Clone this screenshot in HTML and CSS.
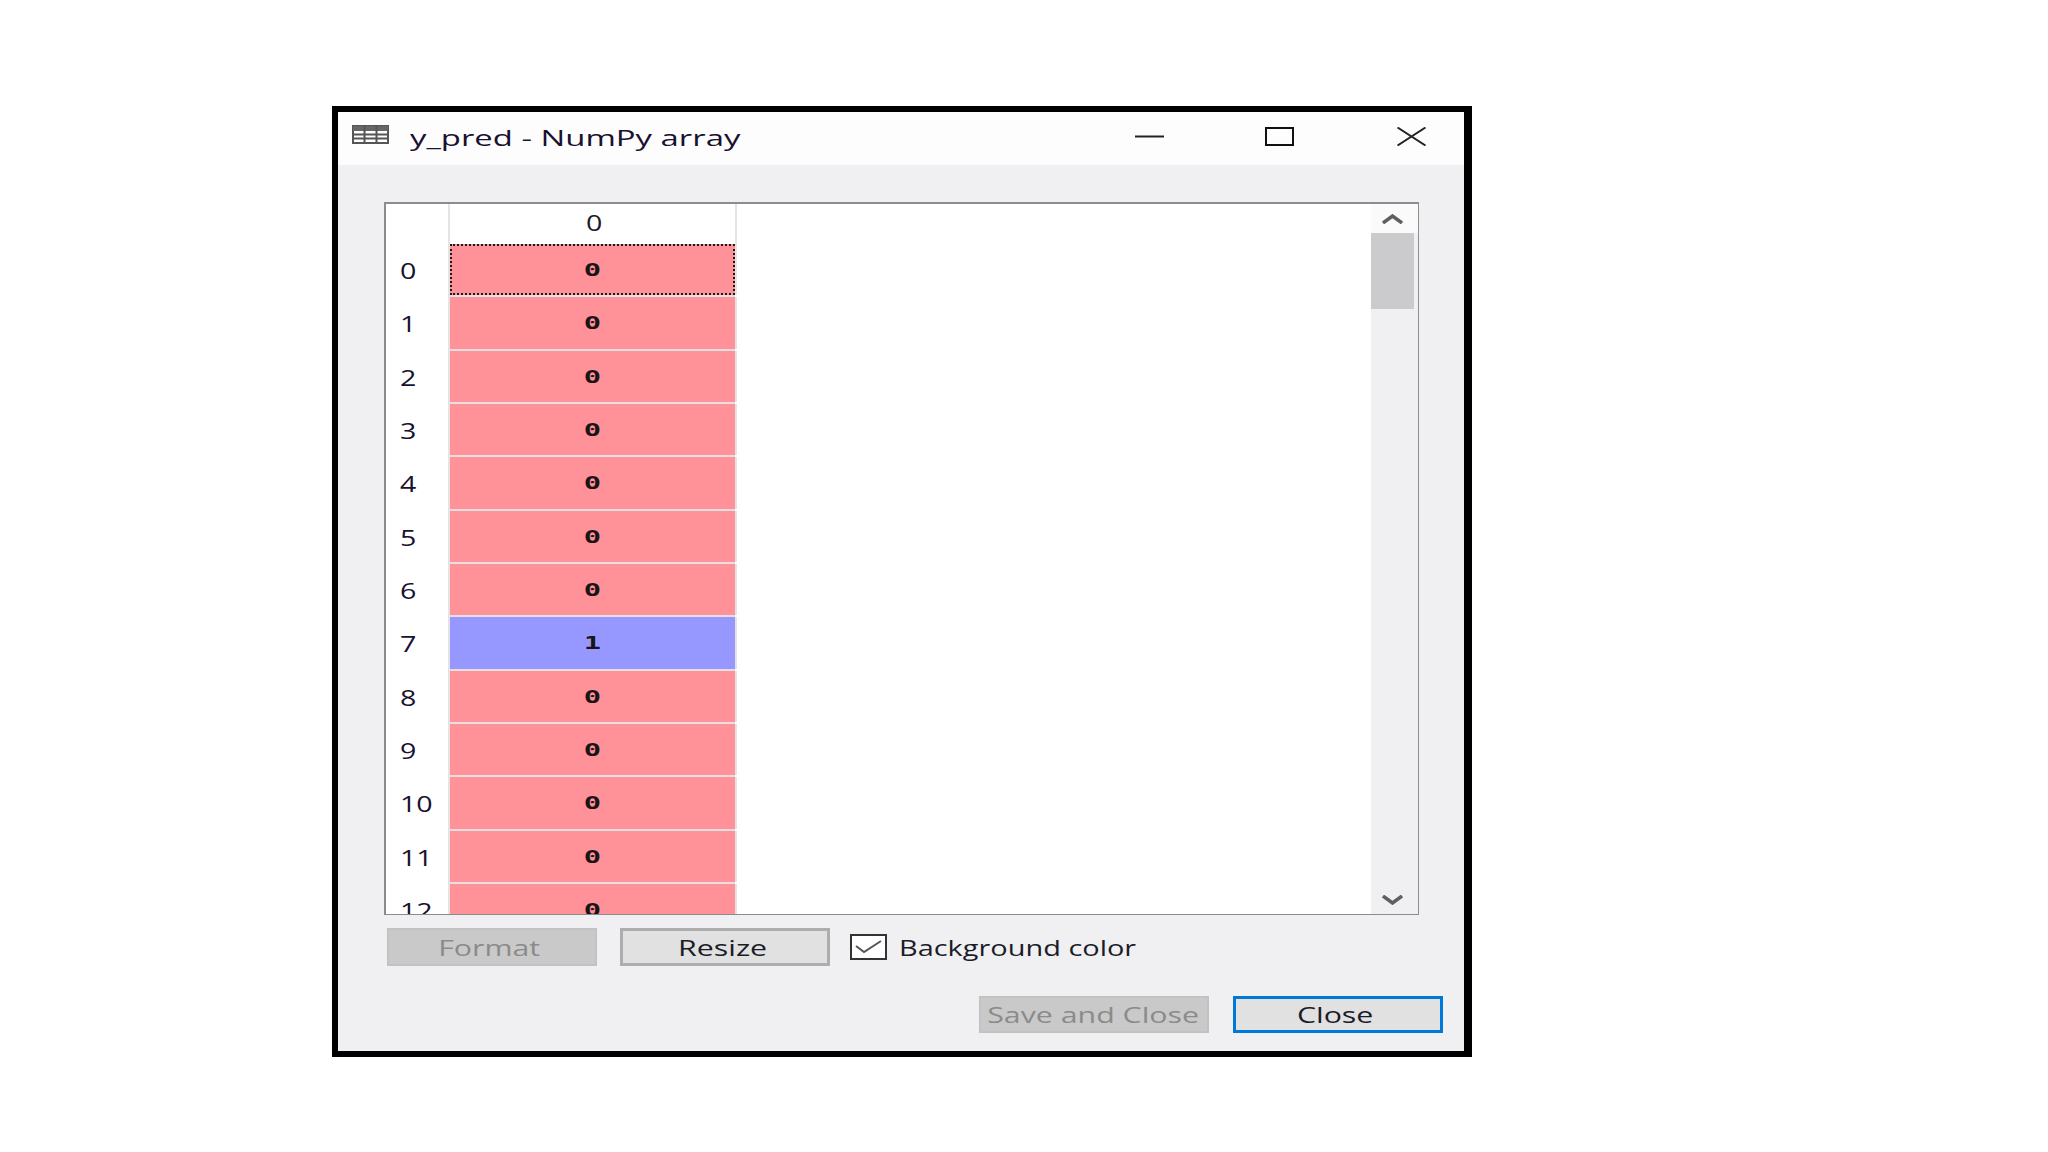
FILE: index.html
```html
<!DOCTYPE html>
<html lang="en">
<head>
<meta charset="utf-8">
<title>y_pred - NumPy array</title>
<link rel="stylesheet" href="styles.css">
</head>
<body>
<div class="window">
  <header class="titlebar">
    <svg class="app-icon" width="37" height="19" viewBox="0 0 37 19"><rect x="1" y="1" width="35" height="17" fill="#fff" stroke="#555" stroke-width="2"/><path d="M1 1h35v5H1z" fill="#666"/><path d="M1 9.500h35M1 13.500h35M12.500 1v17M24.500 1v17" stroke="#555" stroke-width="2" fill="none"/></svg>
    <span class="title"><span class="sx">y_pred - NumPy array</span></span>
    <svg class="ctl ctl-min" width="29" height="19" viewBox="0 0 29 19"><path d="M0 9.500h29" stroke="#222" stroke-width="2"/></svg>
    <svg class="ctl ctl-max" width="29" height="19" viewBox="0 0 29 19"><rect x="1" y="1" width="27" height="17" fill="none" stroke="#111" stroke-width="2"/></svg>
    <svg class="ctl ctl-close" width="29" height="19" viewBox="0 0 29 19"><path d="M0.500 0.500L28.500 18.500M28.500 0.500L0.500 18.500" stroke="#222" stroke-width="2" fill="none"/></svg>
  </header>
  <main class="content">
    <div class="frame">
      <div class="table">
        <div class="row row-head"><div class="rowlabel"></div><div class="colhead"><span class="sx">0</span></div></div>
        <div class="row"><div class="rowlabel"><span class="sx">0</span></div><div class="cell neg focus"><span class="mono">0</span></div></div>
        <div class="row"><div class="rowlabel"><span class="sx">1</span></div><div class="cell neg"><span class="mono">0</span></div></div>
        <div class="row"><div class="rowlabel"><span class="sx">2</span></div><div class="cell neg"><span class="mono">0</span></div></div>
        <div class="row"><div class="rowlabel"><span class="sx">3</span></div><div class="cell neg"><span class="mono">0</span></div></div>
        <div class="row"><div class="rowlabel"><span class="sx">4</span></div><div class="cell neg"><span class="mono">0</span></div></div>
        <div class="row"><div class="rowlabel"><span class="sx">5</span></div><div class="cell neg"><span class="mono">0</span></div></div>
        <div class="row"><div class="rowlabel"><span class="sx">6</span></div><div class="cell neg"><span class="mono">0</span></div></div>
        <div class="row"><div class="rowlabel"><span class="sx">7</span></div><div class="cell pos"><span class="mono">1</span></div></div>
        <div class="row"><div class="rowlabel"><span class="sx">8</span></div><div class="cell neg"><span class="mono">0</span></div></div>
        <div class="row"><div class="rowlabel"><span class="sx">9</span></div><div class="cell neg"><span class="mono">0</span></div></div>
        <div class="row"><div class="rowlabel"><span class="sx">10</span></div><div class="cell neg"><span class="mono">0</span></div></div>
        <div class="row"><div class="rowlabel"><span class="sx">11</span></div><div class="cell neg"><span class="mono">0</span></div></div>
        <div class="row"><div class="rowlabel"><span class="sx">12</span></div><div class="cell neg"><span class="mono">0</span></div></div>
      </div>
      <div class="scrollbar">
        <div class="sb-btn sb-up"><svg width="21" height="10" viewBox="0 0 21 10"><path d="M1 9L10.500 2L20 9" fill="none" stroke="#5f5f5f" stroke-width="3.500"/></svg></div>
        <div class="sb-thumb"></div>
        <div class="sb-track"></div>
        <div class="sb-btn sb-down"><svg width="21" height="10" viewBox="0 0 21 10"><path d="M1 1L10.500 8L20 1" fill="none" stroke="#5f5f5f" stroke-width="3.500"/></svg></div>
      </div>
    </div>
    <div class="tools">
      <div class="btn btn-disabled btn-format"><span class="sx">Format</span></div>
      <div class="btn btn-resize"><span class="sx">Resize</span></div>
      <label class="check">
        <svg class="check-box" width="37" height="26" viewBox="0 0 37 26"><rect x="1" y="1" width="35" height="24" fill="#fff" stroke="#333" stroke-width="2"/><path d="M6 12L14 18L31 7" fill="none" stroke="#555" stroke-width="2"/></svg>
        <span class="check-label"><span class="sx">Background color</span></span>
      </label>
    </div>
    <div class="footer">
      <div class="btn btn-disabled btn-save"><span class="sx">Save and Close</span></div>
      <div class="btn btn-close"><span class="sx">Close</span></div>
    </div>
  </main>
</div>
</body>
</html>
```
FILE: styles.css
```css
html, body { margin: 0; padding: 0; background: #fff; }
body {
  width: 2048px;
  height: 1152px;
  padding: 106px 0 0 332px;
  box-sizing: border-box;
  font-family: "Open Sans", "Noto Sans", sans-serif;
  font-size: 22px;
  color: #1c1c28;
  overflow: hidden;
}
.window {
  width: 1140px;
  height: 951px;
  box-sizing: border-box;
  border: solid #000;
  border-width: 6px 8px 6px 6px;
  background: #f0f0f2;
  display: flex;
  flex-direction: column;
}
.sx { display: inline-block; transform: scaleX(1.3); white-space: nowrap; }
.titlebar {
  height: 53px;
  background: #fdfdfd;
  display: flex;
  align-items: center;
  flex: none;
  padding-left: 14px;
}
.app-icon { flex: none; margin-top: -8px; }
.title { margin-left: 21px; width: 330px; flex: none; margin-top: -3px; font-size: 22.500px; color: #1a1030; }
.title .sx { transform: scaleX(1.46); transform-origin: left center; }
.ctl { flex: none; margin-top: -5px; }
.ctl-min { margin-left: 395px; }
.ctl-max { margin-left: 101px; }
.ctl-close { margin-left: 103px; }
.content { flex: 1; padding: 37px 45px 0 46px; display: flex; flex-direction: column; }
.frame {
  height: 713px;
  box-sizing: border-box;
  border: solid #8c8c8c;
  border-width: 2px 1px 1px 2px;
  background: #fff;
  display: flex;
  overflow: hidden;
  flex: none;
}
.table { flex: 1; overflow: hidden; }
.row { display: flex; height: 53.330px; }
.row-head { height: 40px; }
.rowlabel {
  width: 64px;
  flex: none;
  padding-left: 14px;
  box-sizing: border-box;
  padding-top: 11px;
  line-height: 30px;
  font-size: 22px;
  color: #1a1030;
}
.rowlabel .sx { transform-origin: left center; }
.row-head .rowlabel { padding: 0; }
.rowlabel, .colhead { border-right: 2px solid #e4e4e4; }
.colhead {
  width: 287px;
  box-sizing: border-box;
  flex: none;
  text-align: center;
  line-height: 37px;
  padding-left: 3px;
  font-size: 22px;
}
.cell {
  width: 285px;
  box-sizing: border-box;
  height: 51.330px;
  flex: none;
  text-align: center;
  line-height: 47px;
  box-shadow: 0 2px 0 #e6dfdf, 2px 0 0 #e4e4e4;
}
.neg { background: #ff9199; }
.pos { background: #9698ff; }
.focus { outline: 2px dotted #1a1a1a; outline-offset: -2px; }
.mono {
  display: inline-block;
  font-family: "DejaVu Sans Mono", monospace;
  font-size: 18px;
  font-weight: 700;
  color: #1b1416;
  transform: scaleX(1.6);
}
.scrollbar { width: 47px; flex: none; background: #f0f0f3; display: flex; flex-direction: column; }
.sb-btn { height: 29px; flex: none; display: flex; justify-content: center; padding-right: 4px; }
.sb-up { background: #fafafa; align-items: center; }
.sb-down { align-items: center; }
.sb-thumb { width: 43px; height: 76px; flex: none; background: #cbcbce; }
.sb-track { flex: 1; }
.tools { display: flex; align-items: center; margin: 13px 0 0 3px; height: 38px; flex: none; }
.btn {
  box-sizing: border-box;
  display: flex;
  align-items: center;
  justify-content: center;
  flex: none;
  font-size: 21.500px;
  padding-right: 5px;
}
.btn .sx { transform: scaleX(1.41); }
.btn-disabled { background: #c9c9c9; border: 2px solid #c2c2c2; color: #8b8b8b; }
.btn-format { width: 210px; height: 38px; }
.btn-resize { width: 210px; height: 38px; margin-left: 23px; background: #e1e1e1; border: 3px solid #adadad; }
.check { display: flex; align-items: center; margin-left: 20px; }
.check-box { flex: none; }
.check-label { margin-left: 12px; font-size: 21.500px; color: #1c1c28; }
.check-label .sx { transform: scaleX(1.345); transform-origin: left center; }
.footer { display: flex; justify-content: flex-end; margin: 30px -24px 0 0; flex: none; }
.btn-save { width: 230px; height: 37px; padding-right: 2px; }
.btn-close { width: 210px; height: 37px; margin-left: 24px; background: #e1e1e1; border: 3.500px solid #0078d7; }
```
